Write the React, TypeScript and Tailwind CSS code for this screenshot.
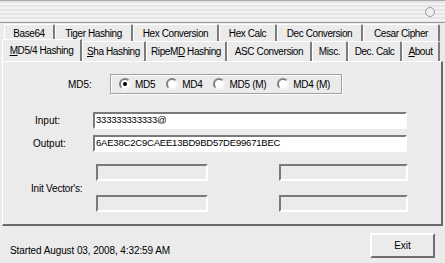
import React from 'react';

const topTabs = [
  { label: 'Base64', w: 'w-[51px]' },
  { label: 'Tiger Hashing', w: 'w-[78px]' },
  { label: 'Hex Conversion', w: 'w-[86px]' },
  { label: 'Hex Calc', w: 'w-[58px]' },
  { label: 'Dec Conversion', w: 'w-[86px]' },
  { label: 'Cesar Cipher', w: 'w-[77px]' },
];

const lowerTabs = [
  { label: 'Sha Hashing', u: 'S', w: 'w-[64px]' },
  { label: 'RipeMD Hashing', u: 'D', w: 'w-[81px]' },
  { label: 'ASC Conversion', w: 'w-[85px]' },
  { label: 'Misc.', w: 'w-[36px]' },
  { label: 'Dec. Calc', w: 'w-[54px]' },
  { label: 'About', u: 'A', w: 'w-[38px]' },
];

function Tab({ label, w, u }: { label: string; w: string; u?: string }) {
  // underline one mnemonic letter like the win32 tab control does
  let content: React.ReactNode = label;
  if (u) {
    const i = label.indexOf(u);
    content = (
      <>
        {label.slice(0, i)}
        <span className="underline">{label[i]}</span>
        {label.slice(i + 1)}
      </>
    );
  }
  return (
    <div
      className={`${w} h-full flex items-center justify-center border-l border-t border-white border-r-2 border-r-[#7c7c7c] rounded-tl-[2px] rounded-tr-[2px] whitespace-pre tracking-[-0.4px]`}
    >
      <span>{content}</span>
    </div>
  );
}

function Radio({ label, checked }: { label: string; checked?: boolean }) {
  return (
    <div className="flex items-center gap-[4px]">
      <div className="w-[12px] h-[12px] rounded-full border-2 border-t-[#808080] border-l-[#808080] border-b-[#f4f4f4] border-r-[#f4f4f4] bg-white flex items-center justify-center">
        {checked && <div className="w-[4px] h-[4px] rounded-full bg-black" />}
      </div>
      <span className="tracking-[-0.3px]">{label}</span>
    </div>
  );
}

function SunkenBox({ w, value, disabled }: { w: string; value?: string; disabled?: boolean }) {
  return (
    <div
      className={`${w} h-[17px] border-2 border-t-[#7a7a7a] border-l-[#7a7a7a] border-b-white border-r-white flex items-center pl-[1px] text-[9.5px] tracking-[-0.2px] ${
        disabled ? 'bg-[#ebebeb]' : 'bg-white'
      }`}
    >
      {value}
    </div>
  );
}

export default function App() {
  return (
    <div className="w-[445px] h-[263px] bg-[#ebebeb] text-[10px] text-black overflow-hidden font-['Liberation_Sans',Arial,sans-serif]">
      {/* title strip */}
      <div className="h-[23px] border-t border-t-[#a8a8a8] border-b border-b-[#9a9a9a] bg-[repeating-linear-gradient(180deg,#e6e6e6_0px,#e6e6e6_2px,#f3f3f3_2px,#f3f3f3_4px)] flex justify-end items-center pr-[10px]">
        <div className="w-[10px] h-[10px] rounded-full border border-[#9a9a9a] bg-[#f0f0f0]" />
      </div>

      {/* tab row 1 */}
      <div className="h-[17px] mt-[1px] flex pl-[4px]">
        {topTabs.map((t) => (
          <Tab key={t.label} label={t.label} w={t.w} />
        ))}
      </div>

      {/* tab row 2 */}
      <div className="h-[20px] flex pl-[2px]">
        <div className="w-[80px] h-[22px] -mt-[2px] flex items-center justify-center border-l border-t border-white border-r-2 border-r-[#7c7c7c] bg-[#ebebeb] relative z-10 tracking-[-0.4px] whitespace-pre">
          <span>
            <span className="underline">M</span>D5/4 Hashing
          </span>
        </div>
        {lowerTabs.map((t) => (
          <Tab key={t.label} label={t.label} w={t.w} u={t.u} />
        ))}
      </div>

      {/* panel */}
      <div className="ml-[2px] w-[441px] h-[165px] border-l border-t border-white border-r-2 border-r-[#6a6a6a] border-b-2 border-b-[#6a6a6a] pt-[12px]">
        <div className="flex items-center h-[20px]">
          <span className="ml-[65px] w-[42px]">MD5:</span>
          <div className="w-[232px] h-[20px] border border-[#a0a0a0] shadow-[inset_1px_1px_0_#fff,1px_1px_0_#fff] flex items-center pl-[8px] gap-[11px]">
            <Radio label="MD5" checked />
            <Radio label="MD4" />
            <Radio label="MD5 (M)" />
            <Radio label="MD4 (M)" />
          </div>
        </div>

        <div className="flex items-center mt-[18px]">
          <span className="ml-[32px] w-[58px]">Input:</span>
          <SunkenBox w="w-[314px]" value="333333333333@" />
        </div>

        <div className="flex items-center mt-[6px]">
          <span className="ml-[30px] w-[60px]">Output:</span>
          <SunkenBox w="w-[314px]" value="6AE38C2C9CAEE13BD9BD57DE99671BEC" />
        </div>

        <div className="flex items-center mt-[12px]">
          <span className="ml-[28px] w-[65px] tracking-[-0.2px]">Init Vector's:</span>
          <div className="flex flex-col gap-[14px]">
            <div className="flex gap-[71px]">
              <SunkenBox w="w-[112px]" disabled />
              <SunkenBox w="w-[129px]" disabled />
            </div>
            <div className="flex gap-[71px]">
              <SunkenBox w="w-[112px]" disabled />
              <SunkenBox w="w-[129px]" disabled />
            </div>
          </div>
        </div>
      </div>

      {/* status bar */}
      <div className="flex items-start justify-between">
        <span className="ml-[10px] mt-[17px] tracking-[-0.1px]">Started August 03, 2008, 4:32:59 AM</span>
        <button className="mr-[10px] mt-[7px] w-[65px] h-[25px] border-2 border-t-white border-l-white border-b-[#6e6e6e] border-r-[#6e6e6e] bg-[#ebebeb] flex items-center justify-center">
          Exit
        </button>
      </div>
    </div>
  );
}
